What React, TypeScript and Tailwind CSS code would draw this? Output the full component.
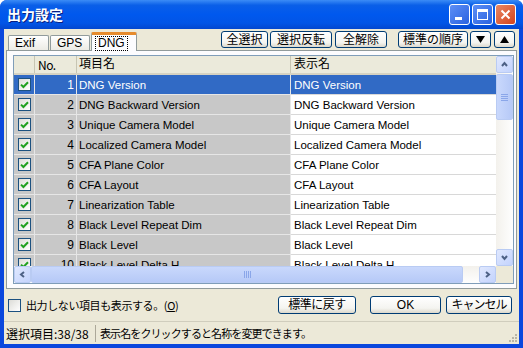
import React from "react";

const rows = [
  { no: 1, name: "DNG Version" },
  { no: 2, name: "DNG Backward Version" },
  { no: 3, name: "Unique Camera Model" },
  { no: 4, name: "Localized Camera Model" },
  { no: 5, name: "CFA Plane Color" },
  { no: 6, name: "CFA Layout" },
  { no: 7, name: "Linearization Table" },
  { no: 8, name: "Black Level Repeat Dim" },
  { no: 9, name: "Black Level" },
  { no: 10, name: "Black Level Delta H" },
];

const font = "font-['Liberation_Sans','Noto_Sans_CJK_JP',sans-serif]";
const jp = "font-['Noto_Sans_CJK_JP',sans-serif]";
const btn =
  "h-[17px] border border-[#003c74] rounded-[3px] bg-[linear-gradient(#ffffff,#f4f4f0_70%,#dcd8cc)] flex items-center justify-center text-[12px] leading-none text-black shrink-0";
const sbBtn =
  "w-[17px] h-[17px] rounded-[2px] border border-[#b9cbf3] bg-[linear-gradient(135deg,#e0e8fe,#c3d3fd)] flex items-center justify-center shrink-0";

function Check({ checked = true }: { checked?: boolean }) {
  return (
    <span className="w-[13px] h-[13px] border border-[#1c5180] bg-[linear-gradient(135deg,#dcdcd7,#ffffff)] flex items-center justify-center shrink-0">
      {checked && (
        <svg width="9" height="9" viewBox="0 0 9 9">
          <path d="M1 4.6 L3.4 7 L8 2.2" stroke="#21a121" strokeWidth="2" fill="none" />
        </svg>
      )}
    </span>
  );
}

function Arrow({ dir }: { dir: "up" | "down" | "left" | "right" }) {
  const d = {
    up: "M2 6 L4.5 3 L7 6",
    down: "M2 3 L4.5 6 L7 3",
    left: "M6 2 L3 4.5 L6 7",
    right: "M3 2 L6 4.5 L3 7",
  }[dir];
  return (
    <svg width="9" height="9" viewBox="0 0 9 9">
      <path d={d} stroke="#4d6185" strokeWidth="2" fill="none" />
    </svg>
  );
}

function Grip({ vertical }: { vertical?: boolean }) {
  return (
    <div className={`flex ${vertical ? "flex-col" : "flex-row"} gap-[1px]`}>
      {[0, 1, 2, 3].map((i) => (
        <span
          key={i}
          className={vertical ? "w-[7px] h-[1px] bg-[#8aa6e9]" : "w-[1px] h-[7px] bg-[#8aa6e9]"}
        />
      ))}
    </div>
  );
}

export default function App() {
  return (
    <div className={`w-[523px] h-[348px] bg-[#0a47dd] rounded-t-[7px] flex flex-col overflow-hidden ${font}`}>
      {/* Title bar */}
      <div className="h-[29px] shrink-0 flex items-center pl-[7px] pr-[7px] bg-[linear-gradient(#3b8cf6,#0a5fe8_18%,#0058ee_50%,#0255e6_80%,#0347cf)]">
        <span className={`text-white font-bold text-[14px] [text-shadow:1px_1px_#0a1f80] ${jp} flex-1`}>
          出力設定
        </span>
        <div className="flex gap-[2px]">
          <span className="w-[21px] h-[21px] rounded-[3px] border border-white bg-[linear-gradient(135deg,#5d8ff6,#2a62e0)] flex items-end justify-start pl-[5px] pb-[4px]">
            <span className="w-[7px] h-[3px] bg-white" />
          </span>
          <span className="w-[21px] h-[21px] rounded-[3px] border border-white bg-[linear-gradient(135deg,#5d8ff6,#2a62e0)] flex items-center justify-center">
            <span className="w-[11px] h-[11px] border-white border-t-[3px] border-x border-b" />
          </span>
          <span className="w-[21px] h-[21px] rounded-[3px] border border-white bg-[linear-gradient(135deg,#e88866,#d5431b)] flex items-center justify-center">
            <svg width="11" height="11" viewBox="0 0 11 11">
              <path d="M1.5 1.5 L9.5 9.5 M9.5 1.5 L1.5 9.5" stroke="white" strokeWidth="2" />
            </svg>
          </span>
        </div>
      </div>

      {/* Body */}
      <div className="flex-1 mx-[4px] mb-[4px] bg-[#ece9d8] flex flex-col">
        {/* Tabs + buttons */}
        <div className="h-[21px] shrink-0 flex items-end relative z-10">
          <div className="flex items-end ml-[4px] h-full">
            <div className="w-[41px] h-[15px] border border-b-0 border-[#919b9c] rounded-t-[2px] bg-[linear-gradient(#ffffff,#ecebe5)] text-[12px] leading-[15px] pl-[6px]">
              Exif
            </div>
            <div className="w-[40px] h-[15px] ml-[1px] border border-b-0 border-[#919b9c] rounded-t-[2px] bg-[linear-gradient(#ffffff,#ecebe5)] text-[12px] leading-[15px] pl-[6px]">
              GPS
            </div>
            <div className="w-[46px] h-[19px] ml-[1px] mb-[-1px] border-x border-[#919b9c] border-t-[3px] border-t-[#e68b2c] rounded-t-[2px] bg-[#fcfcfe] flex items-start pt-[1px] pl-[3px]">
              <span className="text-[12px] leading-[13px] border border-dotted border-black px-[2px]">DNG</span>
            </div>
          </div>
          <div className="flex-1" />
          <div className="flex items-center self-start mt-[2px] mr-[4px]">
            <div className={`${btn} w-[47px]`}>全選択</div>
            <div className={`${btn} w-[62px] ml-[2px]`}>選択反転</div>
            <div className={`${btn} w-[52px] ml-[3px]`}>全解除</div>
            <div className={`${btn} w-[70px] ml-[11px]`}>標準の順序</div>
            <div className={`${btn} w-[21px] ml-[2px]`}>
              <svg width="9" height="7" viewBox="0 0 9 7"><path d="M0 0 H9 L4.5 7 Z" fill="black" /></svg>
            </div>
            <div className={`${btn} w-[21px] ml-[3px]`}>
              <svg width="9" height="7" viewBox="0 0 9 7"><path d="M0 7 H9 L4.5 0 Z" fill="black" /></svg>
            </div>
          </div>
        </div>

        {/* Tab panel */}
        <div className="h-[239px] shrink-0 ml-[2px] mr-[2px] border border-[#919b9c] bg-[#fcfcfe] pt-[4px] pl-[6px]">
          <div className="w-[501px] h-[229px] border border-[#7f9db9] bg-white flex flex-col">
            <div className="h-[210px] flex">
              <div className="w-[482px] overflow-hidden flex flex-col">
                {/* Header */}
                <div className="h-[19px] shrink-0 flex bg-[#ebeadb] border-b-[2px] border-[#d6d2c2] text-[12px] leading-[17px]">
                  <div className="w-[21px] border-r border-[#c7c5b2]" />
                  <div className={`w-[42px] border-r border-[#c7c5b2] pl-[3px] ${jp} tracking-[-0.5px]`}>No.</div>
                  <div className="w-[214px] border-r border-[#c7c5b2] pl-[2px]">項目名</div>
                  <div className="flex-1 pl-[3px]">表示名</div>
                </div>
                {rows.map((r, i) => {
                  const sel = i === 0;
                  const gray = sel ? "bg-[#316ac5] text-white" : "bg-[#c8c8c8] text-black";
                  return (
                    <div key={r.no} className="h-[20px] shrink-0 flex text-[11.5px] leading-[20px]">
                      <div className={`w-[21px] ${gray} border-b border-r border-[#e6e6e6] flex items-center justify-center`}>
                        <Check />
                      </div>
                      <div className={`w-[42px] ${gray} border-b border-r border-[#e6e6e6] text-right pr-[2px] text-[12px]`}>
                        {r.no}
                      </div>
                      <div className={`w-[214px] ${gray} border-b border-r border-[#e6e6e6] pl-[2px] whitespace-nowrap`}>
                        {r.name}
                      </div>
                      <div
                        className={`flex-1 ${sel ? "bg-[#316ac5] text-white" : "bg-white text-black"} border-b border-[#d8d8d8] pl-[3px] whitespace-nowrap`}
                      >
                        {r.name}
                      </div>
                    </div>
                  );
                })}
              </div>
              {/* Vertical scrollbar */}
              <div className="w-[17px] bg-[linear-gradient(90deg,#f3f1ec,#fefefe)] flex flex-col">
                <div className={sbBtn}><Arrow dir="up" /></div>
                <div className="h-[1px]" />
                <div className="h-[46px] rounded-[2px] border border-[#b9cbf3] bg-[linear-gradient(90deg,#c9d8fc,#b6c9f7)] flex items-center justify-center">
                  <Grip vertical />
                </div>
                <div className="flex-1" />
                <div className={sbBtn}><Arrow dir="down" /></div>
              </div>
            </div>
            {/* Horizontal scrollbar */}
            <div className="h-[17px] flex">
              <div className="w-[482px] flex bg-[linear-gradient(#f3f1ec,#fefefe)]">
                <div className={sbBtn}><Arrow dir="left" /></div>
                <div className="w-[432px] rounded-[2px] border border-[#b9cbf3] bg-[linear-gradient(#c9d8fc,#b6c9f7)] flex items-center justify-center">
                  <Grip />
                </div>
                <div className="flex-1" />
                <div className={sbBtn}><Arrow dir="right" /></div>
              </div>
              <div className="flex-1 bg-[#ece9d8]" />
            </div>
          </div>
        </div>

        {/* Bottom controls */}
        <div className="h-[32px] shrink-0 flex items-center pl-[4px] pr-[7px]">
          <Check checked={false} />
          <span className={`ml-[5px] text-[11px] tracking-[-0.4px] ${jp}`}>
            出力しない項目も表示する。(<span className="underline">O</span>)
          </span>
          <div className="flex-1" />
          <div className={`${btn} w-[78px] h-[18px] tracking-[-0.5px]`}>標準に戻す</div>
          <div className={`${btn} w-[71px] h-[18px] ml-[14px]`}>OK</div>
          <div className={`${btn} w-[66px] h-[18px] ml-[5px] tracking-[-1px]`}>キャンセル</div>
        </div>

        {/* Status bar */}
        <div className={`flex-1 border-t border-[#d0cdbd] flex items-center text-[12px] ${jp} relative`}>
          <div className="w-[92px] pl-[2px] border-r border-[#aca899] h-[17px] leading-[17px]">選択項目:38/38</div>
          <div className="pl-[4px] leading-[17px] text-[11px] tracking-[-0.9px]">
            表示名をクリックすると名称を変更できます。
          </div>
          <svg className="absolute right-[1px] bottom-[1px]" width="11" height="11" viewBox="0 0 11 11">
            <g fill="#b8b5a6">
              <rect x="8" y="2" width="2" height="2" />
              <rect x="5" y="5" width="2" height="2" />
              <rect x="8" y="5" width="2" height="2" />
              <rect x="2" y="8" width="2" height="2" />
              <rect x="5" y="8" width="2" height="2" />
              <rect x="8" y="8" width="2" height="2" />
            </g>
          </svg>
        </div>
      </div>
    </div>
  );
}
